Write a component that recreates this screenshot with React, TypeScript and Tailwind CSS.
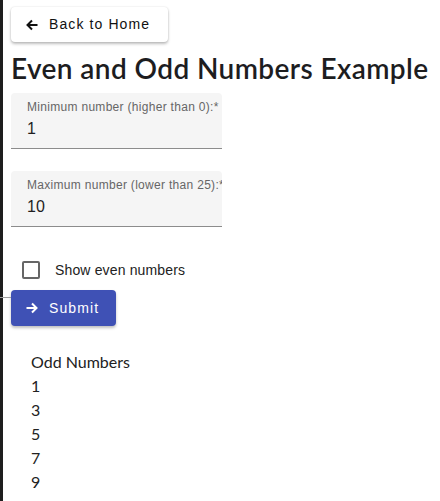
import React from "react";

const ArrowLeft = () => (
  <svg width="12" height="12" viewBox="0 0 12 12" fill="none" stroke="currentColor" strokeWidth="2" strokeLinecap="butt">
    <path d="M11.5 6H1.5M6 1.5L1.5 6L6 10.5" />
  </svg>
);
const ArrowRight = () => (
  <svg width="12" height="12" viewBox="0 0 12 12" fill="none" stroke="currentColor" strokeWidth="2" strokeLinecap="butt">
    <path d="M0.5 6H10.5M6 1.5L10.5 6L6 10.5" />
  </svg>
);

const Field = ({ label, value }: { label: string; value: string }) => (
  <div className="w-[211px] h-[56px] bg-[#f5f5f5] rounded-t-[4px] border-b border-[#8c8c8c] overflow-hidden px-[16px] pt-[6px]">
    <div className="text-[12px] leading-[16px] text-[#666] whitespace-nowrap tracking-[0.3px]">{label}</div>
    <div className="text-[16px] leading-[24px] text-[#1f1f1f] mt-[2px]">{value}</div>
  </div>
);

export default function App() {
  return (
    <div className="relative flex min-h-[501px] bg-white" style={{ fontFamily: "'Liberation Sans', Arial, sans-serif" }}>
      <div className="w-[3px] bg-[#1e1e1e] shrink-0" />
      <div className="absolute left-0 top-[297px] w-[11px] h-px bg-[#a0a0a0]" />
      <div className="flex-1 pl-[8px] pt-[7px]">
        <button className="flex items-center h-[35px] w-[157px] rounded-[4px] bg-white shadow-[0_2px_3px_rgba(0,0,0,0.25),0_0_2px_rgba(0,0,0,0.12)] pl-[15px] text-[14px] tracking-[1.1px] text-[#111]">
          <ArrowLeft />
          <span className="ml-[11px]">Back to Home</span>
        </button>
        <h1
          className="mt-[8px] text-[28px] leading-[36px] font-semibold text-[#1d1d1f] whitespace-nowrap tracking-[0.4px]"
          style={{ fontFamily: "Lato, sans-serif" }}
        >
          Even and Odd Numbers Example
        </h1>
        <div className="mt-[7px]">
          <Field label="Minimum number (higher than 0):*" value="1" />
        </div>
        <div className="mt-[22px]">
          <Field label="Maximum number (lower than 25):*" value="10" />
        </div>
        <div className="flex items-center mt-[34px] ml-[11px] h-[18px]">
          <div className="w-[18px] h-[18px] border-2 border-[#666] rounded-[2px]" />
          <span className="ml-[15px] text-[14px] text-[#222] tracking-[0.15px]">Show even numbers</span>
        </div>
        <button className="mt-[11px] flex items-center h-[36px] w-[105px] rounded-[4px] bg-[#3f51b5] text-white shadow-[0_2px_3px_rgba(0,0,0,0.25)] pl-[15px] text-[14px] tracking-[1.1px]">
          <ArrowRight />
          <span className="ml-[11px]">Submit</span>
        </button>
        <div className="mt-[24px] pl-[20px] text-[16px] leading-[24px] text-[#222]" style={{ fontFamily: "Lato, sans-serif" }}>
          <div>Odd Numbers</div>
          <div>1</div>
          <div>3</div>
          <div>5</div>
          <div>7</div>
          <div>9</div>
        </div>
      </div>
    </div>
  );
}
